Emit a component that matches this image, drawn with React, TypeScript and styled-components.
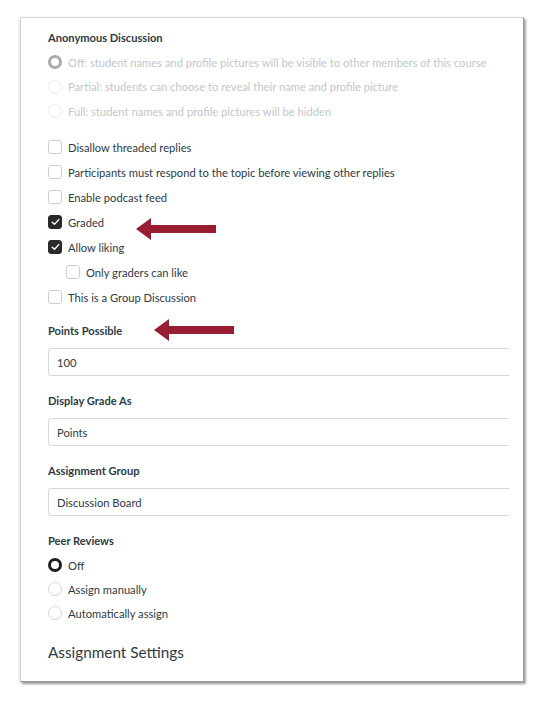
import React from "react";
import styled, { createGlobalStyle } from "styled-components";

const Global = createGlobalStyle`
  html, body { margin: 0; padding: 0; background: #ffffff; }
  body { font-family: Lato, "Open Sans", sans-serif; color: #2d3b45; }
`;

const Page = styled.div`
  width: 543px;
  height: 703px;
  box-sizing: border-box;
  padding: 17px 19px 0 20px;
  background: #fff;
`;

const Card = styled.div`
  position: relative;
  box-sizing: border-box;
  width: 504px;
  height: 665px;
  background: #fff;
  border: 1px solid #d4d4d4;
  border-right-color: #9a9a9a;
  border-bottom-color: #9a9a9a;
  box-shadow: 2px 2px 2px rgba(0, 0, 0, 0.35), -1px 1px 3px rgba(0, 0, 0, 0.12);
  padding: 10px 14px 0 27px;
  display: flex;
  flex-direction: column;
`;

const Label = styled.div<{ $mt?: number }>`
  height: 20px;
  line-height: 20px;
  font-size: 11.1px;
  font-weight: 700;
  color: #2d3b45;
  margin-top: ${(p) => p.$mt ?? 0}px;
`;

const Group = styled.div<{ $mt?: number }>`
  display: flex;
  flex-direction: column;
  margin-top: ${(p) => p.$mt ?? 0}px;
`;

const Row = styled.div<{ $h: number; $indent?: number; $disabled?: boolean }>`
  height: ${(p) => p.$h}px;
  display: flex;
  align-items: center;
  gap: 6px;
  padding-left: ${(p) => p.$indent ?? 0}px;
  font-size: 11.2px;
  color: ${(p) => (p.$disabled ? "#c3c6c9" : "#2d3b45")};
  white-space: nowrap;
`;

const Radio = styled.span<{ $state: "off" | "selected" | "disabledSel" | "disabled" }>`
  box-sizing: border-box;
  width: 14px;
  height: 14px;
  flex: 0 0 14px;
  border-radius: 50%;
  background: #fff;
  border: ${(p) =>
    p.$state === "selected"
      ? "3.5px solid #1f1f1f"
      : p.$state === "disabledSel"
      ? "3.5px solid #a9a9a9"
      : p.$state === "disabled"
      ? "1px solid #ececec"
      : "1px solid #d2d6d9"};
`;

const Box = styled.span<{ $checked?: boolean }>`
  box-sizing: border-box;
  width: 14px;
  height: 14px;
  flex: 0 0 14px;
  border-radius: 3px;
  border: 1px solid ${(p) => (p.$checked ? "#2a2a2a" : "#cbd0d4")};
  background: ${(p) => (p.$checked ? "#2a2a2a" : "#fff")};
  display: flex;
  align-items: center;
  justify-content: center;
`;

const Input = styled.div`
  box-sizing: border-box;
  height: 28px;
  margin-top: 7px;
  border: 1px solid #d3d8dc;
  border-right: none;
  border-radius: 4px 0 0 4px;
  padding-left: 8px;
  display: flex;
  align-items: center;
  font-size: 11.2px;
  color: #2d3b45;
`;

const Title = styled.div`
  margin-top: 15px;
  height: 24px;
  line-height: 24px;
  font-size: 15.3px;
  font-weight: 400;
  color: #2d3b45;
`;

const Arrow = styled.svg<{ $left: number; $top: number }>`
  position: absolute;
  left: ${(p) => p.$left}px;
  top: ${(p) => p.$top}px;
`;

const Check = () => (
  <svg width="9" height="8" viewBox="0 0 9 8">
    <path d="M1.2 4.2 L3.5 6.3 L7.8 1.6" fill="none" stroke="#fff" strokeWidth="1.4" strokeLinecap="round" strokeLinejoin="round" />
  </svg>
);

const RedArrow = ({ left, top }: { left: number; top: number }) => (
  <Arrow $left={left} $top={top} width="80" height="22" viewBox="0 0 80 22">
    <polygon points="0,11 15,0 15,7 80,7 80,15 15,15 15,22" fill="#981d33" />
  </Arrow>
);

export default function App() {
  return (
    <>
      <Global />
      <Page>
        <Card>
          <Label>Anonymous Discussion</Label>
          <Group $mt={2}>
            <Row $h={24.5} $disabled>
              <Radio $state="disabledSel" />
              Off: student names and profile pictures will be visible to other members of this course
            </Row>
            <Row $h={24.5} $disabled>
              <Radio $state="disabled" />
              Partial: students can choose to reveal their name and profile picture
            </Row>
            <Row $h={24.5} $disabled>
              <Radio $state="disabled" />
              Full: student names and profile pictures will be hidden
            </Row>
          </Group>
          <Group $mt={11}>
            <Row $h={25}>
              <Box />
              Disallow threaded replies
            </Row>
            <Row $h={25}>
              <Box />
              Participants must respond to the topic before viewing other replies
            </Row>
            <Row $h={25}>
              <Box />
              Enable podcast feed
            </Row>
            <Row $h={25}>
              <Box $checked>
                <Check />
              </Box>
              Graded
            </Row>
            <Row $h={25}>
              <Box $checked>
                <Check />
              </Box>
              Allow liking
            </Row>
            <Row $h={25} $indent={18}>
              <Box />
              Only graders can like
            </Row>
            <Row $h={25}>
              <Box />
              This is a Group Discussion
            </Row>
          </Group>
          <Label $mt={11.5}>Points Possible</Label>
          <Input>100</Input>
          <Label $mt={15}>Display Grade As</Label>
          <Input>Points</Input>
          <Label $mt={15}>Assignment Group</Label>
          <Input>Discussion Board</Input>
          <Label $mt={15}>Peer Reviews</Label>
          <Group $mt={2}>
            <Row $h={24}>
              <Radio $state="selected" />
              Off
            </Row>
            <Row $h={24}>
              <Radio $state="off" />
              Assign manually
            </Row>
            <Row $h={24}>
              <Radio $state="off" />
              Automatically assign
            </Row>
          </Group>
          <Title>Assignment Settings</Title>
          <RedArrow left={115} top={200} />
          <RedArrow left={133} top={301} />
        </Card>
      </Page>
    </>
  );
}
